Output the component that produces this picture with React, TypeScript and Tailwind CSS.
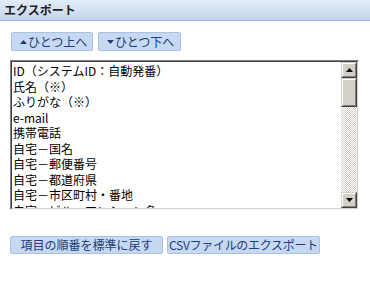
import React from "react";

const items = [
  "ID（システムID：自動発番）",
  "氏名（※）",
  "ふりがな（※）",
  "e-mail",
  "携帯電話",
  "自宅－国名",
  "自宅－郵便番号",
  "自宅－都道府県",
  "自宅－市区町村・番地",
  "自宅－ビル・マンション名",
  "自宅－電話番号",
];

function Up() {
  return (
    <svg width="7" height="4" viewBox="0 0 7 4" className="shrink-0">
      <polygon points="3.5,0 7,4 0,4" fill="#1c3e7c" />
    </svg>
  );
}
function Down() {
  return (
    <svg width="7" height="4" viewBox="0 0 7 4" className="shrink-0">
      <polygon points="0,0 7,0 3.5,4" fill="#1c3e7c" />
    </svg>
  );
}

function ScrollBtn({ dir }: { dir: "up" | "down" }) {
  return (
    <div className="h-[16px] w-[16px] border border-t-[#d4d0c8] border-l-[#d4d0c8] border-b-[#404040] border-r-[#404040] bg-[#d4d0c8]">
      <div className="flex h-full w-full items-center justify-center border border-t-white border-l-white border-b-[#808080] border-r-[#808080]">
        <svg width="7" height="4" viewBox="0 0 7 4">
          {dir === "up" ? (
            <polygon points="3.5,0 7,4 0,4" fill="#000" />
          ) : (
            <polygon points="0,0 7,0 3.5,4" fill="#000" />
          )}
        </svg>
      </div>
    </div>
  );
}

export default function App() {
  return (
    <div
      className="relative h-[281px] w-[370px] overflow-hidden bg-white"
      style={{ fontFamily: '"Noto Sans CJK JP", "Liberation Sans", sans-serif' }}
    >
      <div className="h-[21px] border-b border-[#8db2e3] bg-gradient-to-b from-[#e4ecf7] to-[#c3d5ed] pl-[4px] text-[12px] font-bold leading-[20px] text-[#222]">
        エクスポート
      </div>

      <div className="mt-[11px] flex gap-[5px] pl-[11px]">
        <button className="flex h-[19px] w-[82px] items-center gap-[1px] whitespace-nowrap rounded-[2px] border border-[#a9c1e2] bg-[#c6d9f1] pl-[8px] text-[12px] leading-none text-[#1c3e7c]">
          <Up />
          <span>ひとつ上へ</span>
        </button>
        <button className="flex h-[19px] w-[83px] items-center gap-[1px] whitespace-nowrap rounded-[2px] border border-[#a9c1e2] bg-[#c6d9f1] pl-[8px] text-[12px] leading-none text-[#1c3e7c]">
          <Down />
          <span>ひとつ下へ</span>
        </button>
      </div>

      <div className="ml-[10px] mt-[9px] h-[150px] w-[349px] border border-t-[#808080] border-l-[#808080] border-b-white border-r-white">
        <div className="flex h-full w-full border border-t-[#404040] border-l-[#404040] border-b-[#d4d0c8] border-r-[#d4d0c8]">
          <div className="flex-1 overflow-hidden bg-white pl-[1px] pt-[1px] text-[12px] leading-[15.5px] text-black">
            {items.map((t) => (
              <div key={t} className="whitespace-nowrap">
                {t}
              </div>
            ))}
          </div>
          <div className="flex w-[16px] flex-col">
            <ScrollBtn dir="up" />
            <div className="h-[29px] w-[16px] border border-t-[#d4d0c8] border-l-[#d4d0c8] border-b-[#404040] border-r-[#404040] bg-[#d4d0c8]">
              <div className="h-full w-full border border-t-white border-l-white border-b-[#808080] border-r-[#808080]" />
            </div>
            <div className="flex-1 bg-[repeating-conic-gradient(#d4d0c8_0%_25%,#ffffff_0%_50%)] bg-[length:2px_2px]" />
            <ScrollBtn dir="down" />
          </div>
        </div>
      </div>

      <div className="ml-[10px] mt-[26px] flex gap-[4px]">
        <button className="h-[18px] w-[153px] whitespace-nowrap rounded-[2px] border border-[#a9c1e2] bg-[#c6d9f1] px-0 text-[12px] leading-none text-[#1c3e7c]">
          項目の順番を標準に戻す
        </button>
        <button className="h-[18px] w-[153px] whitespace-nowrap rounded-[2px] border border-[#a9c1e2] bg-[#c6d9f1] px-0 text-[12px] leading-none tracking-[-0.3px] text-[#1c3e7c]">
          CSVファイルのエクスポート
        </button>
      </div>
    </div>
  );
}
